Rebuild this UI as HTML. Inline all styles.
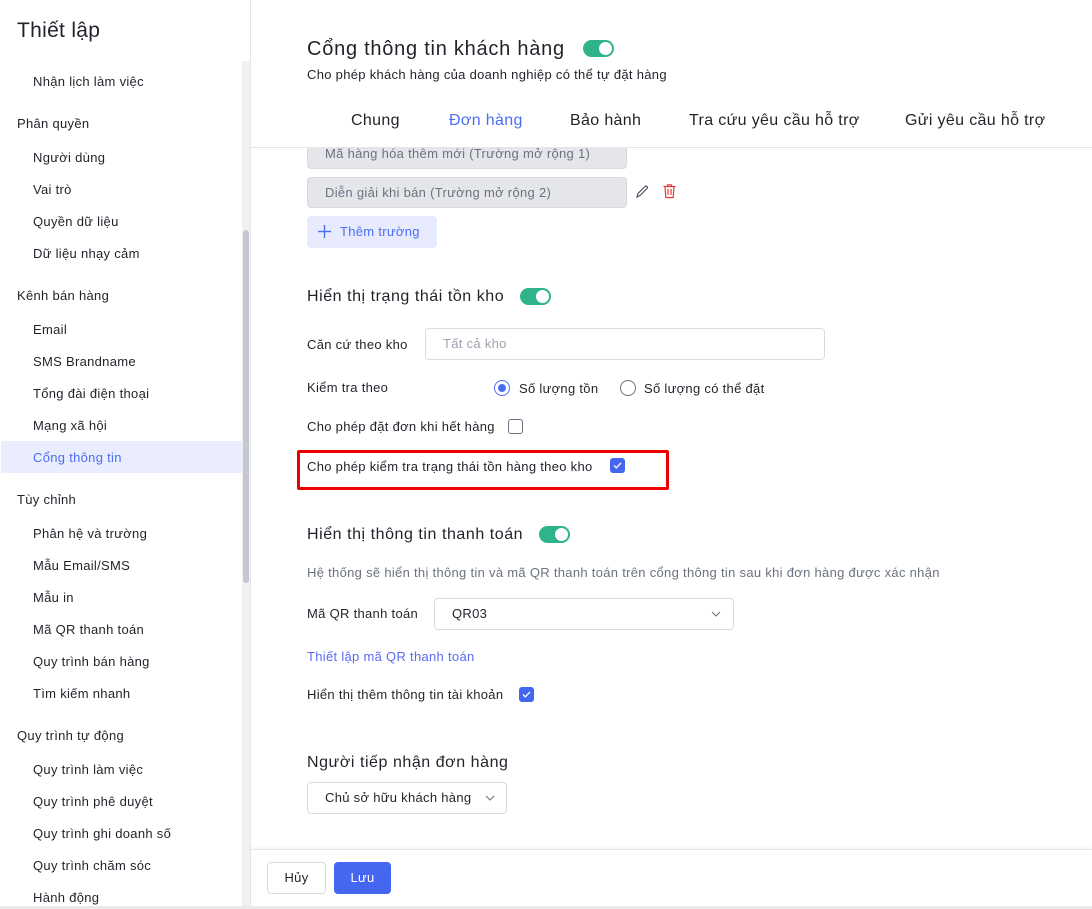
<!DOCTYPE html>
<html><head><meta charset="utf-8">
<style>
*{box-sizing:border-box;margin:0;padding:0}
body{width:1092px;height:909px;overflow:hidden;background:#fff;font-family:"Liberation Sans",Arial,sans-serif;color:#1f2329;position:relative;letter-spacing:0.3px}
.a{position:absolute;white-space:nowrap}
.side{position:absolute;left:0;top:0;width:251px;height:907px;background:#fff;border-right:1px solid #e3e5e8}
.si{position:absolute;left:33px;font-size:13px;color:#1f2329;line-height:16px;margin-top:1px}
.sh{position:absolute;left:17px;font-size:13px;color:#1f2329;line-height:16px;margin-top:1px}
.lbl{font-size:13px;color:#1f2329;line-height:16px}
.h{font-size:16px;line-height:20px;letter-spacing:0.55px}
.tog{position:absolute;width:31px;height:17px;border-radius:9px;background:#2fb38a}
.tog:after{content:"";position:absolute;right:2px;top:2px;width:13px;height:13px;border-radius:50%;background:#fff}
.cb{position:absolute;width:15px;height:15px;border-radius:3px}
.cb.on{background:#4466f0}
.cb.off{border:1px solid #6b7280;background:#fff}
.tab{position:absolute;top:111px;font-size:16px;line-height:20px;color:#1f2329;letter-spacing:0.35px}
.field{position:absolute;left:307px;width:320px;height:31px;background:#e5e6ea;border:1px solid #d8dae0;border-radius:4px;font-size:13px;color:#6b7280;padding-left:17px;line-height:29px}
</style></head><body>

<div class="side">
  <div class="a" style="left:17px;top:19px;font-size:21px;line-height:24px;color:#1f2329;letter-spacing:0.3px">Thiết lập</div>
  <div style="position:absolute;left:242px;top:61px;width:8px;height:846px;background:#f1f1f1"></div>
  <div style="position:absolute;left:243px;top:230px;width:6px;height:353px;background:#c5c8d0;border-radius:3px"></div>
  <div class="si" style="top:73px">Nhận lịch làm việc</div>
  <div class="sh" style="top:115px">Phân quyền</div>
  <div class="si" style="top:149px">Người dùng</div>
  <div class="si" style="top:181px">Vai trò</div>
  <div class="si" style="top:213px">Quyền dữ liệu</div>
  <div class="si" style="top:245px">Dữ liệu nhạy cảm</div>
  <div class="sh" style="top:287px">Kênh bán hàng</div>
  <div class="si" style="top:321px">Email</div>
  <div class="si" style="top:353px">SMS Brandname</div>
  <div class="si" style="top:385px">Tổng đài điện thoại</div>
  <div class="si" style="top:417px">Mạng xã hội</div>
  <div style="position:absolute;left:1px;top:441px;width:241px;height:32px;background:#eaedfd"></div>
  <div class="si" style="top:449px;color:#4c6ef5">Cổng thông tin</div>
  <div class="sh" style="top:491px">Tùy chỉnh</div>
  <div class="si" style="top:525px">Phân hệ và trường</div>
  <div class="si" style="top:557px">Mẫu Email/SMS</div>
  <div class="si" style="top:589px">Mẫu in</div>
  <div class="si" style="top:621px">Mã QR thanh toán</div>
  <div class="si" style="top:653px">Quy trình bán hàng</div>
  <div class="si" style="top:685px">Tìm kiếm nhanh</div>
  <div class="sh" style="top:727px">Quy trình tự động</div>
  <div class="si" style="top:761px">Quy trình làm việc</div>
  <div class="si" style="top:793px">Quy trình phê duyệt</div>
  <div class="si" style="top:825px">Quy trình ghi doanh số</div>
  <div class="si" style="top:857px">Quy trình chăm sóc</div>
  <div class="si" style="top:889px">Hành động</div>
</div>

<div class="field" style="top:138px">Mã hàng hóa thêm mới (Trường mở rộng 1)</div>
<div class="field" style="top:177px">Diễn giải khi bán (Trường mở rộng 2)</div>
<svg class="a" style="left:634px;top:184px" width="16" height="16" viewBox="0 0 16 16" fill="none" stroke="#4b5563" stroke-width="1.2"><path d="M3 13l1-3.5 7-7a1.4 1.4 0 012 2l-7 7L3 13z"/></svg>
<svg class="a" style="left:662px;top:183px" width="15" height="16" viewBox="0 0 15 16" fill="none" stroke="#e53935" stroke-width="1.2"><path d="M1.5 3.5h12M5.5 3.5V1.8h4v1.7M3 3.5l.8 11h7.4l.8-11M6 6v6M9 6v6"/></svg>

<div style="position:absolute;left:251px;top:0;width:841px;height:148px;background:#fff;border-bottom:1px solid #e3e5e8"></div>
<div class="a" style="left:307px;top:37px;font-size:20px;line-height:24px;letter-spacing:0.75px">Cổng thông tin khách hàng</div>
<div class="tog" style="left:583px;top:40px"></div>
<div class="a" style="left:307px;top:67px;font-size:13px;line-height:16px">Cho phép khách hàng của doanh nghiệp có thể tự đặt hàng</div>
<div class="tab" style="left:351px">Chung</div>
<div class="tab" style="left:449px;color:#4c6ef5">Đơn hàng</div>
<div class="tab" style="left:570px">Bảo hành</div>
<div class="tab" style="left:689px">Tra cứu yêu cầu hỗ trợ</div>
<div class="tab" style="left:905px">Gửi yêu cầu hỗ trợ</div>

<div class="a" style="left:307px;top:216px;width:130px;height:32px;background:#e8ebfd;border-radius:4px"></div>
<svg class="a" style="left:317px;top:224px" width="15" height="15" viewBox="0 0 15 15" stroke="#4c6ef5" stroke-width="1.4"><path d="M7.5 1v13M1 7.5h13"/></svg>
<div class="a" style="left:340px;top:224px;font-size:13px;line-height:16px;color:#4c6ef5">Thêm trường</div>

<div class="a h" style="left:307px;top:287px">Hiển thị trạng thái tồn kho</div>
<div class="tog" style="left:520px;top:288px"></div>
<div class="a lbl" style="left:307px;top:337px">Căn cứ theo kho</div>
<div class="a" style="left:425px;top:328px;width:400px;height:32px;border:1px solid #d8dae0;border-radius:4px;font-size:13px;color:#9ca3af;padding-left:17px;line-height:30px">Tất cả kho</div>
<div class="a lbl" style="left:307px;top:380px">Kiểm tra theo</div>
<div class="a" style="left:494px;top:380px;width:16px;height:16px;border-radius:50%;border:1px solid #4c6ef5"><div style="position:absolute;left:3px;top:3px;width:8px;height:8px;border-radius:50%;background:#4c6ef5"></div></div>
<div class="a lbl" style="left:519px;top:381px">Số lượng tồn</div>
<div class="a" style="left:620px;top:380px;width:16px;height:16px;border-radius:50%;border:1px solid #6b7280"></div>
<div class="a lbl" style="left:644px;top:381px">Số lượng có thể đặt</div>
<div class="a lbl" style="left:307px;top:419px">Cho phép đặt đơn khi hết hàng</div>
<div class="cb off" style="left:508px;top:419px"></div>
<div class="a" style="left:297px;top:450px;width:372px;height:40px;border:3px solid #ee0000;border-radius:2px"></div>
<div class="a lbl" style="left:307px;top:459px">Cho phép kiểm tra trạng thái tồn hàng theo kho</div>
<div class="cb on" style="left:610px;top:458px"><svg width="15" height="15" viewBox="0 0 15 15" fill="none" stroke="#fff" stroke-width="1.3"><path d="M4 7.5l2.3 2.3L11 5"/></svg></div>

<div class="a h" style="left:307px;top:525px">Hiển thị thông tin thanh toán</div>
<div class="tog" style="left:539px;top:526px"></div>
<div class="a" style="left:307px;top:565px;font-size:13px;line-height:16px;color:#6b7280">Hệ thống sẽ hiển thị thông tin và mã QR thanh toán trên cổng thông tin sau khi đơn hàng được xác nhận</div>
<div class="a lbl" style="left:307px;top:606px">Mã QR thanh toán</div>
<div class="a" style="left:434px;top:598px;width:300px;height:32px;border:1px solid #d8dae0;border-radius:4px;font-size:13px;padding-left:17px;line-height:30px">QR03</div>
<svg class="a" style="left:711px;top:610px" width="10" height="8" viewBox="0 0 10 8" fill="none" stroke="#6b7280" stroke-width="1.1"><path d="M1 2l4 4 4-4"/></svg>
<div class="a" style="left:307px;top:649px;font-size:13px;line-height:16px;color:#5b6cf0">Thiết lập mã QR thanh toán</div>
<div class="a lbl" style="left:307px;top:687px">Hiển thị thêm thông tin tài khoản</div>
<div class="cb on" style="left:519px;top:687px"><svg width="15" height="15" viewBox="0 0 15 15" fill="none" stroke="#fff" stroke-width="1.3"><path d="M4 7.5l2.3 2.3L11 5"/></svg></div>

<div class="a h" style="left:307px;top:753px">Người tiếp nhận đơn hàng</div>
<div class="a" style="left:307px;top:782px;width:200px;height:32px;border:1px solid #d8dae0;border-radius:4px;font-size:13px;padding-left:17px;line-height:30px">Chủ sở hữu khách hàng</div>
<svg class="a" style="left:485px;top:794px" width="10" height="8" viewBox="0 0 10 8" fill="none" stroke="#6b7280" stroke-width="1.1"><path d="M1 2l4 4 4-4"/></svg>

<div style="position:absolute;left:251px;top:849px;width:841px;height:58px;background:#fff;border-top:1px solid #e3e5e8;box-shadow:0 -2px 3px rgba(0,0,0,0.04)"></div>
<div class="a" style="left:267px;top:862px;width:59px;height:32px;border:1px solid #d8dae0;border-radius:4px;font-size:13px;text-align:center;line-height:30px">Hủy</div>
<div class="a" style="left:334px;top:862px;width:57px;height:32px;background:#4466f0;border-radius:4px;font-size:13px;color:#fff;text-align:center;line-height:32px">Lưu</div>
<div style="position:absolute;left:0;top:906px;width:1092px;height:3px;background:#e9eaec"></div>
</body></html>
